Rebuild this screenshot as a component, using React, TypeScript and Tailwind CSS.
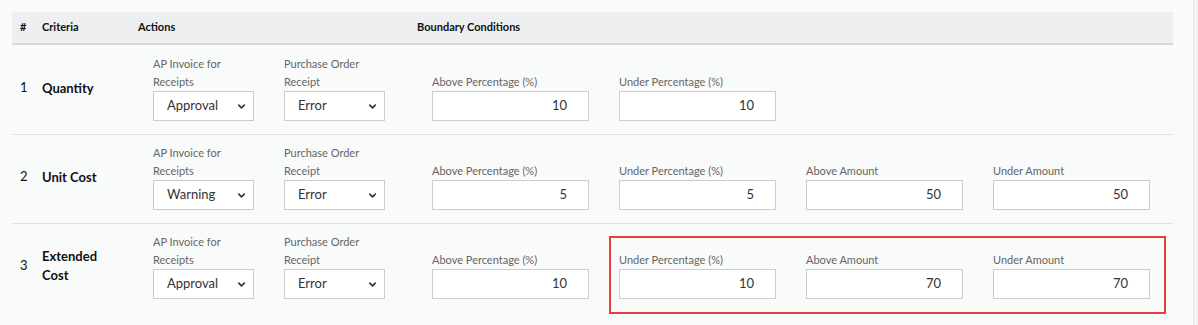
import { ChevronDown } from 'lucide-react';

type Row = {
  id: number;
  criteria: string;
  apInvoice: string;
  poReceipt: string;
  conditions: { label: string; value: string }[];
};

const rows: Row[] = [
  {
    id: 1,
    criteria: 'Quantity',
    apInvoice: 'Approval',
    poReceipt: 'Error',
    conditions: [
      { label: 'Above Percentage (%)', value: '10' },
      { label: 'Under Percentage (%)', value: '10' }
    ]
  },
  {
    id: 2,
    criteria: 'Unit Cost',
    apInvoice: 'Warning',
    poReceipt: 'Error',
    conditions: [
      { label: 'Above Percentage (%)', value: '5' },
      { label: 'Under Percentage (%)', value: '5' },
      { label: 'Above Amount', value: '50' },
      { label: 'Under Amount', value: '50' }
    ]
  },
  {
    id: 3,
    criteria: 'Extended Cost',
    apInvoice: 'Approval',
    poReceipt: 'Error',
    conditions: [
      { label: 'Above Percentage (%)', value: '10' },
      { label: 'Under Percentage (%)', value: '10' },
      { label: 'Above Amount', value: '70' },
      { label: 'Under Amount', value: '70' }
    ]
  }
];

function SelectField({ label, value }: { label: [string, string]; value: string }) {
  return (
    <div className="flex w-[131px] flex-col px-[15px]">
      <span className="text-[11px] leading-[18px] text-[#666]">{label[0]}</span>
      <span className="text-[11px] leading-[18px] text-[#666]">{label[1]}</span>
      <div className="flex h-[30px] w-[101px] items-center justify-between border border-[#ccc] bg-white pl-[13px] pr-[6px] text-[13px] text-[#333]">
        <span>{value}</span>
        <ChevronDown size={11} strokeWidth={3.5} className="text-[#333]" />
      </div>
    </div>
  );
}

function InputField({ label, value }: { label: string; value: string }) {
  return (
    <div className="flex w-[187px] flex-col px-[15px]">
      <span className="text-[11px] leading-[18px] text-[#666]">{label}</span>
      <div className="flex h-[30px] w-[157px] items-center justify-end border border-[#ccc] bg-white pr-[21px] text-[13px] text-[#333]">
        {value}
      </div>
    </div>
  );
}

export default function App() {
  return (
    <div
      className="relative flex h-[325px] w-[1198px] bg-[#f9fafa]"
      style={{ fontFamily: 'Lato, "Liberation Sans", sans-serif' }}
    >
      <div className="w-[1193px] pl-[12px] pt-[12px] pr-[20px]">
        <div className="flex h-[33px] items-center border-b-2 border-[#d6d9db] bg-[#edeff0] text-[11px] font-bold text-[#111]">
          <div className="w-[30px] pl-[8px]">#</div>
          <div className="w-[96px]">Criteria</div>
          <div className="w-[279px]">Actions</div>
          <div>Boundary Conditions</div>
        </div>

        {rows.map((row, i) => (
          <div
            key={row.id}
            className={`flex items-center pb-[13px] ${i === 0 ? 'pt-[10px]' : 'pt-[9px]'} ${i < rows.length - 1 ? 'border-b border-[#dfe2e3]' : ''}`}
          >
            <div className="w-[30px] pl-[8px] text-[13px] text-[#111]">{row.id}</div>
            <div className="w-[96px]">
              <div className="w-[80px] text-[13px] font-bold leading-[19px] text-[#111]">
                {row.criteria}
              </div>
            </div>
            <div className="flex w-[279px] items-end">
              <SelectField label={['AP Invoice for', 'Receipts']} value={row.apInvoice} />
              <SelectField label={['Purchase Order', 'Receipt']} value={row.poReceipt} />
            </div>
            <div className="flex items-end self-end">
              {row.conditions.map((c) => (
                <InputField key={c.label} label={c.label} value={c.value} />
              ))}
            </div>
          </div>
        ))}
      </div>
      <div className="w-[5px] border-l border-[#e4e6e7] bg-[#f1f2f3]" />

      {/* review highlight */}
      <div className="pointer-events-none absolute left-[609px] top-[236px] h-[78px] w-[557px] border-2 border-[#ee3b3b]" />
    </div>
  );
}
